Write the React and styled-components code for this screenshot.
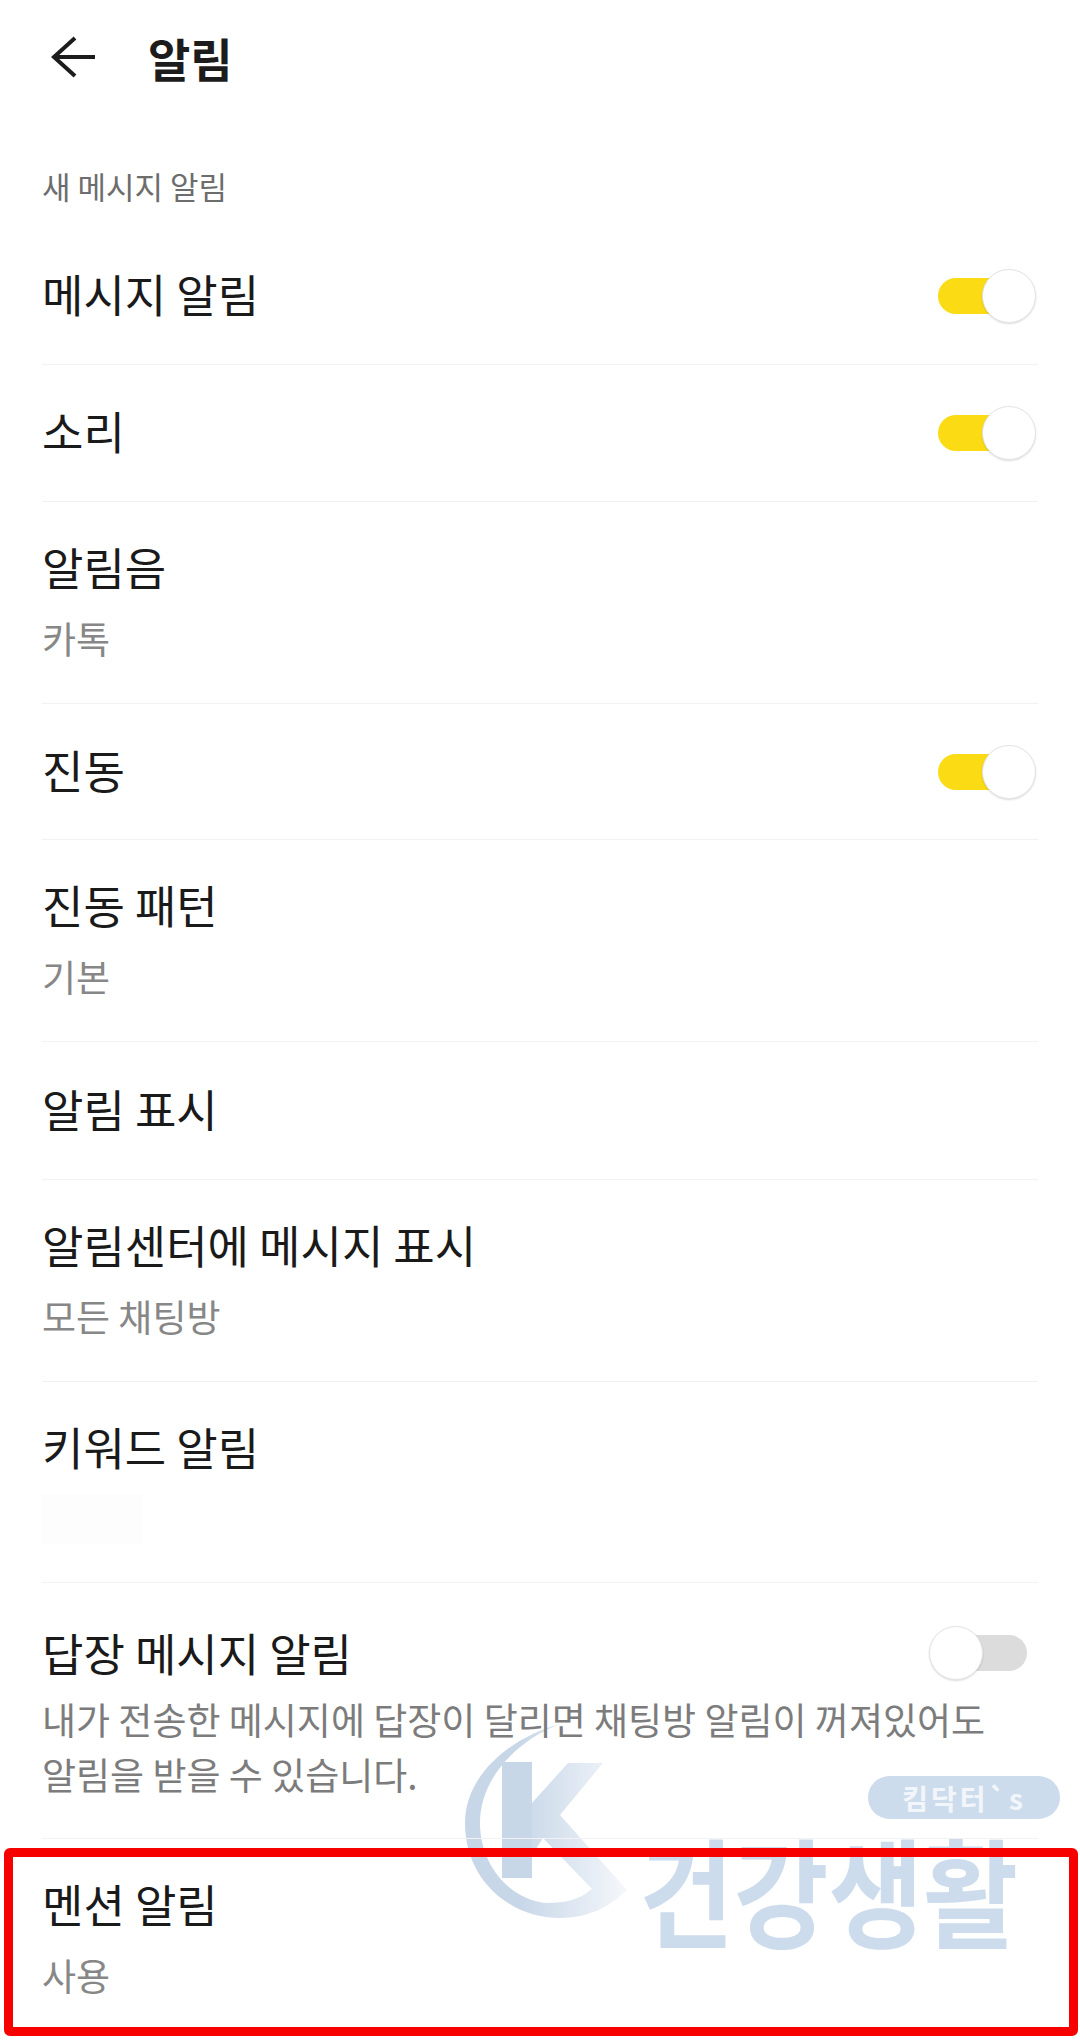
import React from 'react';
import styled, { createGlobalStyle } from 'styled-components';

const GlobalStyle = createGlobalStyle`
  html, body {
    margin: 0;
    padding: 0;
    background: #fff;
  }
  body {
    font-family: "Noto Sans CJK KR", "Noto Sans", sans-serif;
  }
`;

const Page = styled.div`
  position: relative;
  width: 1080px;
  height: 2040px;
  overflow: hidden;
  background: #fff;
`;

const Header = styled.header`
  display: flex;
  align-items: center;
  height: 114px;
  padding-left: 50px;
`;

const BackIcon = styled.svg`
  width: 48px;
  height: 48px;
  margin-right: 50px;
`;

const Title = styled.h1`
  margin: 0;
  font-size: 46px;
  font-weight: 700;
  color: #1c1c1c;
  line-height: 1;
`;

const Content = styled.main`
  position: relative;
  z-index: 1;
  padding: 0 42px;
`;

const SectionLabel = styled.div`
  display: flex;
  align-items: center;
  height: 114px;
  padding-top: 28px;
  box-sizing: border-box;
  font-size: 31px;
  color: #6d6d6d;
`;

const Row = styled.div`
  display: flex;
  align-items: ${(p) => (p.$top ? 'flex-start' : 'center')};
  justify-content: space-between;
  box-sizing: border-box;
  height: ${(p) => p.$height}px;
  padding-top: ${(p) => (p.$top ? p.$top : 0)}px;
  border-bottom: 1px solid ${(p) => (p.$last ? 'transparent' : '#f2f2f2')};
`;

const RowText = styled.div`
  display: flex;
  flex: 1;
  flex-direction: column;
  min-width: 0;
  gap: 11px;
`;

const RowTitle = styled.div`
  font-size: 45px;
  line-height: 60px;
  margin-top: ${(p) => (p.$flat ? '-4px' : '0')};
  color: #1a1a1a;
`;

const RowSub = styled.div`
  font-size: 37px;
  line-height: 60px;
  min-height: 60px;
  color: #878787;
`;

const RowDesc = styled.div`
  margin-top: -2px;
  font-size: 37px;
  line-height: 55px;
  color: #7c7c7c;
  white-space: nowrap;
`;

// the blurred-out value under the keyword row
const BlurPatch = styled.div`
  width: 100px;
  height: 50px;
  margin-top: 6px;
  background: #fdfdfd;
`;

const Switch = styled.div`
  position: relative;
  flex: none;
  width: 88px;
  height: 36px;
  margin: ${(p) => (p.$up ? '12px 11px 0 0' : '0 12px 0 0')};
  border-radius: 18px;
  background: ${(p) => (p.$on ? '#fbdc14' : '#dcdcdc')};
`;

const Knob = styled.span`
  position: absolute;
  top: -9px;
  ${(p) => (p.$on ? 'right: -10px;' : 'left: -10px;')}
  width: 54px;
  height: 54px;
  box-sizing: border-box;
  border-radius: 50%;
  background: #fff;
  border: 1px solid #e4e4e4;
  box-shadow: 0 1px 2px rgba(0, 0, 0, 0.14);
`;

const Watermark = styled.div`
  position: absolute;
  left: 460px;
  top: 1715px;
  z-index: 0;
  width: 620px;
  height: 240px;
`;

const LogoMark = styled.svg`
  position: absolute;
  left: 0;
  top: 0;
  width: 180px;
  height: 210px;
`;

const WatermarkText = styled.div`
  position: absolute;
  left: 179px;
  top: 118px;
  font-size: 103px;
  line-height: 110px;
  font-weight: 700;
  color: #cddcec;
  white-space: nowrap;
  transform: scaleY(1.15);
  transform-origin: center;
`;

const Pill = styled.div`
  position: absolute;
  left: 408px;
  top: 61px;
  width: 192px;
  height: 43px;
  display: flex;
  align-items: center;
  justify-content: center;
  border-radius: 22px;
  background: #cddcec;
  color: #f2f6fa;
  font-size: 28px;
  line-height: 1;
  font-weight: 700;
  letter-spacing: 3px;
`;

const Highlight = styled.div`
  position: absolute;
  z-index: 2;
  left: 4px;
  top: 1848px;
  width: 1074px;
  height: 188px;
  box-sizing: border-box;
  border: 9px solid #f60000;
  border-radius: 6px;
`;

const Toggle = ({ on, up }) => (
  <Switch $on={on} $up={up}>
    <Knob $on={on} />
  </Switch>
);

const rows = [
  { title: '메시지 알림', toggle: true, height: 137 },
  { title: '소리', toggle: true, height: 137 },
  { title: '알림음', sub: '카톡', height: 202 },
  { title: '진동', toggle: true, height: 136 },
  { title: '진동 패턴', sub: '기본', height: 202 },
  { title: '알림 표시', height: 138 },
  { title: '알림센터에 메시지 표시', sub: '모든 채팅방', height: 202 },
  { title: '키워드 알림', sub: <BlurPatch />, height: 201 },
];

const App = () => (
  <Page>
    <GlobalStyle />
    <Watermark>
      <LogoMark viewBox="0 0 180 210">
        <defs>
          <linearGradient id="markFade" gradientUnits="userSpaceOnUse" x1="60" y1="0" x2="172" y2="0">
            <stop offset="0" stopColor="#c8d7e8" />
            <stop offset="1" stopColor="#f7f9fc" />
          </linearGradient>
        </defs>
        <path
          d="M103 8C50 22 5 60 5 108C5 165 50 203 100 203C128 203 150 192 167 175L133 173C120 185 105 188 87 188C50 185 20 150 20 108C20 65 55 25 103 8Z"
          fill="url(#markFade)"
        />
        <path d="M42 47H72V163H42Z" fill="#c8d7e8" />
        <path
          d="M72 88L108 48H143L100 100L167 175H133L83 123L72 140Z"
          fill="url(#markFade)"
        />
      </LogoMark>
      <Pill>킴닥터`s</Pill>
      <WatermarkText>건강생활</WatermarkText>
    </Watermark>
    <Header>
      <BackIcon viewBox="0 0 48 48">
        <path
          d="M45 24H5M25 5L4 24L25 43"
          fill="none"
          stroke="#1c1c1c"
          strokeWidth="4"
        />
      </BackIcon>
      <Title>알림</Title>
    </Header>
    <Content>
      <SectionLabel>새 메시지 알림</SectionLabel>
      {rows.map((row) => (
        <Row key={row.title} $height={row.height}>
          <RowText>
            <RowTitle $flat={row.sub === undefined}>{row.title}</RowTitle>
            {row.sub !== undefined && <RowSub>{row.sub}</RowSub>}
          </RowText>
          {row.toggle && <Toggle on />}
        </Row>
      ))}
      <Row $height={256} $top={40}>
        <RowText>
          <RowTitle>답장 메시지 알림</RowTitle>
          <RowDesc>
            내가 전송한 메시지에 답장이 달리면 채팅방 알림이 꺼져있어도
            <br />
            알림을 받을 수 있습니다.
          </RowDesc>
        </RowText>
        <Toggle up />
      </Row>
      <Row $height={202} $last>
        <RowText>
          <RowTitle>멘션 알림</RowTitle>
          <RowSub>사용</RowSub>
        </RowText>
      </Row>
    </Content>
    <Highlight />
  </Page>
);

export default App;
